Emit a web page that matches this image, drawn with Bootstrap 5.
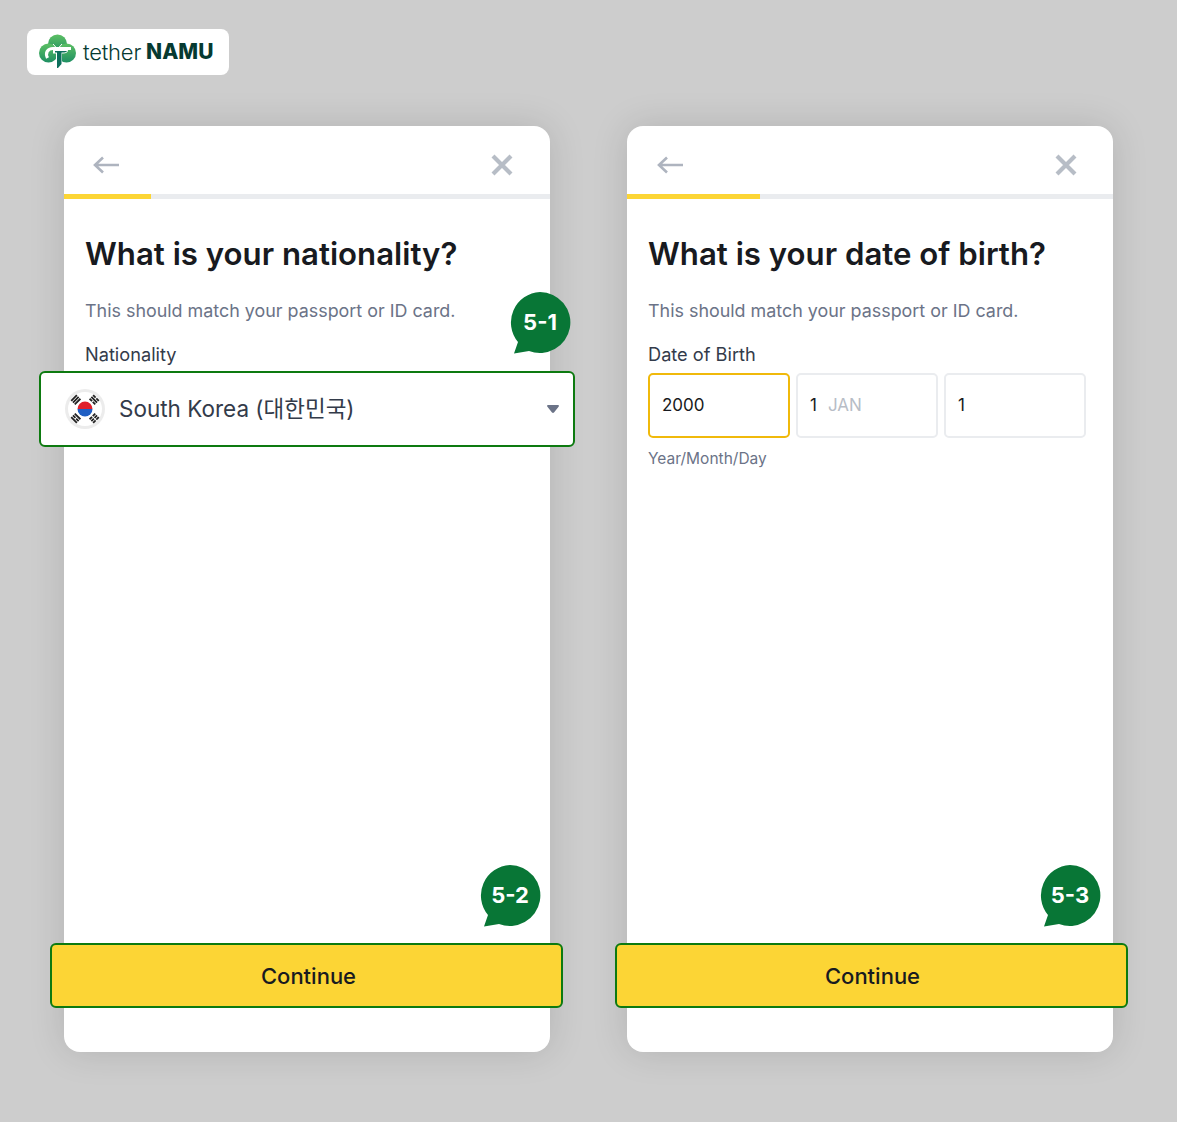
<!DOCTYPE html>
<html lang="en">
<head>
  <meta charset="UTF-8">
  <meta name="viewport" content="width=device-width, initial-scale=1.0">
  <title>Nationality and date of birth</title>
  <link href="https://cdn.jsdelivr.net/npm/bootstrap@5.3.0/dist/css/bootstrap.min.css" rel="stylesheet">
  <style>
    body {
      background-color: #cdcdcd;
      font-family: "Inter", "Noto Sans CJK KR", sans-serif;
      min-height: 1122px;
    }
    .page-wrap {
      padding: 29px 0 0 27px;
    }
    .logo-box {
      width: 202px;
      height: 46px;
      background: #fff;
      border-radius: 8px;
      padding-left: 12px;
      color: #063a31;
    }
    .logo-thin {
      font-size: 22px;
      font-weight: 300;
      letter-spacing: -0.2px;
      margin-left: 7px;
    }
    .logo-bold {
      font-size: 21px;
      font-weight: 800;
      margin-left: 5px;
    }
    .screens {
      margin: 51px 0 0 37px;
      gap: 77px;
    }
    .screen {
      position: relative;
      width: 486px;
      height: 926px;
      background: #fff;
      border-radius: 16px;
      box-shadow: 0 0 36px rgba(0, 0, 0, .13);
    }
    .screen-top {
      height: 68px;
      padding: 10px 37px 0 29px;
    }
    .screen-top.top-b {
      padding: 10px 36px 0 30px;
    }
    .step-bar {
      height: 5px;
      background: #eaecef;
      border-radius: 0;
    }
    .step-bar .progress-bar {
      background: #fcd535;
    }
    .screen-body {
      padding: 0 21px 44px;
    }
    .screen-title {
      font-size: 31.2px;
      font-weight: 600;
      line-height: 40px;
      color: #181a20;
      margin: 35px 0 0;
      white-space: nowrap;
    }
    .screen-sub {
      font-size: 17.9px;
      line-height: 24px;
      color: #6b7387;
      margin: 25px 0 0;
    }
    .field-label {
      font-size: 18.2px;
      line-height: 24px;
      color: #333b4a;
      margin: 19px 0 0;
    }
    .nation-select {
      height: 76px;
      margin: 5px -46px 0;
      padding: 0 14px 0 24px;
      background: #fff;
      border: 2px solid #0d7a10;
      border-radius: 6px;
      position: relative;
      z-index: 2;
      font-size: 22.5px;
      color: #333b4a;
    }
    .nation-name {
      margin-left: 14px;
    }
    .caret-down {
      margin-left: auto;
    }
    .date-box {
      width: 142px;
      height: 65px;
      padding-left: 12px;
      border: 2px solid #eaecef;
      border-radius: 5px;
      font-size: 17px;
      color: #181a20;
    }
    .date-box.is-active {
      border-color: #f0b90b;
    }
    .date-row {
      margin-top: 7px;
      gap: 6px;
    }
    .month-name {
      color: #b7bdc6;
      margin-left: 11px;
    }
    .date-hint {
      font-size: 15.5px;
      line-height: 20px;
      color: #6b7387;
      margin: 11px 0 0;
    }
    .next-btn {
      position: absolute;
      top: 817px;
      height: 65px;
      padding-top: 8px;
      font-size: 22px;
      font-weight: 500;
      color: #181a20;
      background: #fcd535;
      border: 2px solid #0d7a10;
      border-radius: 6px;
      z-index: 2;
    }
    .next-btn:hover {
      background: #fcd535;
      border-color: #0d7a10;
      color: #181a20;
    }
    .next-a {
      left: -14px;
      width: 513px;
      padding-left: 16px;
    }
    .next-b {
      left: -12px;
      width: 513px;
      padding-left: 14px;
    }
    .note-tag {
      position: absolute;
      width: 62px;
      height: 64px;
      z-index: 3;
    }
    .note-tag span {
      position: absolute;
      top: 0;
      left: 0;
      width: 64px;
      line-height: 61px;
      text-align: center;
      font-size: 22px;
      font-weight: 700;
      color: #fff;
    }
  </style>
</head>
<body>
<div class="page-wrap">

  <!-- logo -->
  <div class="logo-box d-flex align-items-center">
    <svg width="37" height="36" viewBox="0 0 37 36">
      <defs>
        <linearGradient id="leafA" x1="0" y1="0" x2="0" y2="1">
          <stop offset="0" stop-color="#5cbf63"/>
          <stop offset="1" stop-color="#1f8f63"/>
        </linearGradient>
      </defs>
      <circle cx="18.500" cy="10" r="9.500" fill="url(#leafA)"/>
      <circle cx="9.500" cy="19" r="9.500" fill="url(#leafA)"/>
      <circle cx="27.500" cy="19" r="9.500" fill="url(#leafA)"/>
      <path d="M18.500 15 14 10M18.500 15 23 10" stroke="#fff" stroke-width="1" fill="none"/>
      <path d="M8.500 24c-2.500-5 0-9.500 5.500-9.500h18" stroke="#fff" stroke-width="3.200" fill="none"/>
      <path d="M14 16h15c0 2-1.500 3.500-5 3.500h-1V31l-4 4h-2V19.500h-3z" fill="#fff"/>
      <path d="M16 17h12c-.5 1-2 1.500-4.500 1.500H22.500V30l-3.500 4h-1V18.500h-2z" fill="#0d6f5c"/>
    </svg>
    <span class="logo-thin">tether</span><span class="logo-bold">NAMU</span>
  </div>

  <div class="screens d-flex">

    <!-- nationality screen -->
    <div class="screen">
      <div class="screen-top d-flex align-items-center justify-content-between">
        <svg width="26" height="18" viewBox="0 0 26 18" fill="none" stroke="#aeb4bf" stroke-width="2.600">
          <path d="M26 9H2M10 1.500 2 9l8 7.500"/>
        </svg>
        <svg width="22" height="22" viewBox="0 0 22 22" fill="none" stroke="#b7bdc6" stroke-width="4.200">
          <path d="M2 2l18 18M20 2 2 20"/>
        </svg>
      </div>
      <div class="progress step-bar">
        <div class="progress-bar" style="width: 18%"></div>
      </div>
      <div class="screen-body">
        <h1 class="screen-title">What is your nationality?</h1>
        <p class="screen-sub">This should match your passport or ID card.</p>
        <p class="field-label">Nationality</p>
        <div class="nation-select d-flex align-items-center">
          <svg width="40" height="40" viewBox="-20 -20 40 40">
            <circle r="20" fill="#ececec"/>
            <circle r="17" fill="#fff"/>
            <path d="M-7.500 0a7.500 7.500 0 0 1 15 0z" fill="#e0202c"/>
            <path d="M-7.500 0a7.500 7.500 0 0 0 15 0z" fill="#1f5fc4"/>
            <g fill="none" stroke="#222" stroke-width="1.800">
              <path transform="rotate(-45)" d="M-4-10.500h8M-4-13h8M-4-15.500h8"/>
              <path transform="rotate(45)" d="M-4-10.500h3.500M.5-10.500h3.500M-4-13h8M-4-15.500h3.500M.5-15.500h3.500"/>
              <path transform="rotate(-135)" d="M-4-10.500h8M-4-13h3.500M.5-13h3.500M-4-15.500h8"/>
              <path transform="rotate(135)" d="M-4-10.500h3.500M.5-10.500h3.500M-4-13h3.500M.5-13h3.500M-4-15.500h3.500M.5-15.500h3.500"/>
            </g>
          </svg>
          <span class="nation-name">South Korea (대한민국)</span>
          <svg class="caret-down" width="12" height="9" viewBox="0 0 12 9">
            <path d="M1 0h10c1 0 1.200 1 .6 1.700L7 7.600c-.5.600-1.500.600-2 0L.4 1.700C-.2 1 0 0 1 0z" fill="#6b7387"/>
          </svg>
        </div>
      </div>
      <button class="btn next-btn next-a" type="button">Continue</button>
      <div class="note-tag" style="left: 444px; top: 166px">
        <svg width="64" height="64" viewBox="0 0 64 64">
          <path d="M32 0a30.500 30.500 0 1 1-11 59L6 61.500 10 50A30.500 30.500 0 0 1 32 0z" fill="#087636"/>
        </svg>
        <span>5-1</span>
      </div>
      <div class="note-tag" style="left: 414px; top: 739px">
        <svg width="64" height="64" viewBox="0 0 64 64">
          <path d="M32 0a30.500 30.500 0 1 1-11 59L6 61.500 10 50A30.500 30.500 0 0 1 32 0z" fill="#087636"/>
        </svg>
        <span>5-2</span>
      </div>
    </div>

    <!-- date of birth screen -->
    <div class="screen">
      <div class="screen-top top-b d-flex align-items-center justify-content-between">
        <svg width="26" height="18" viewBox="0 0 26 18" fill="none" stroke="#aeb4bf" stroke-width="2.600">
          <path d="M26 9H2M10 1.500 2 9l8 7.500"/>
        </svg>
        <svg width="22" height="22" viewBox="0 0 22 22" fill="none" stroke="#b7bdc6" stroke-width="4.200">
          <path d="M2 2l18 18M20 2 2 20"/>
        </svg>
      </div>
      <div class="progress step-bar">
        <div class="progress-bar" style="width: 27.400%"></div>
      </div>
      <div class="screen-body">
        <h1 class="screen-title">What is your date of birth?</h1>
        <p class="screen-sub">This should match your passport or ID card.</p>
        <p class="field-label">Date of Birth</p>
        <div class="date-row d-flex">
          <div class="date-box is-active d-flex align-items-center">2000</div>
          <div class="date-box d-flex align-items-center">1<span class="month-name">JAN</span></div>
          <div class="date-box d-flex align-items-center">1</div>
        </div>
        <p class="date-hint">Year/Month/Day</p>
      </div>
      <button class="btn next-btn next-b" type="button">Continue</button>
      <div class="note-tag" style="left: 411px; top: 739px">
        <svg width="64" height="64" viewBox="0 0 64 64">
          <path d="M32 0a30.500 30.500 0 1 1-11 59L6 61.500 10 50A30.500 30.500 0 0 1 32 0z" fill="#087636"/>
        </svg>
        <span>5-3</span>
      </div>
    </div>

  </div>
</div>
<script src="https://cdn.jsdelivr.net/npm/bootstrap@5.3.0/dist/js/bootstrap.bundle.min.js"></script>
</body>
</html>
